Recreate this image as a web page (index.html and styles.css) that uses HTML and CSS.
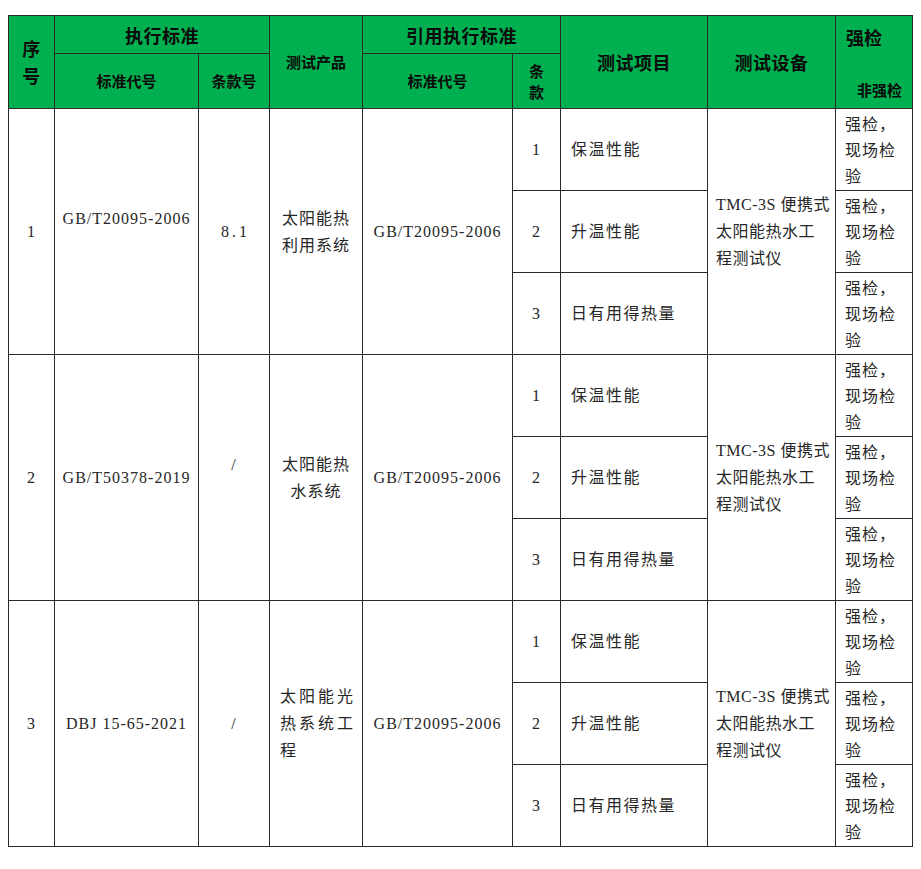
FILE: index.html
```html
<!DOCTYPE html>
<html lang="zh-CN">
<head>
<meta charset="utf-8">
<title>检测标准</title>
<link rel="stylesheet" href="styles.css">
</head>
<body>
<div class="sheet">
<table class="spec">
  <colgroup>
    <col class="c-no"><col class="c-code"><col class="c-clause"><col class="c-prod"><col class="c-ref"><col class="c-item-no"><col class="c-item"><col class="c-dev"><col class="c-check">
  </colgroup>
  <thead>
    <tr class="h1">
      <th rowspan="2" class="th-big th-no">序<br>号</th>
      <th colspan="2" class="th-big">执行标准</th>
      <th rowspan="2" class="th-small">测试产品</th>
      <th colspan="2" class="th-big">引用执行标准</th>
      <th rowspan="2" class="th-big">测试项目</th>
      <th rowspan="2" class="th-big">测试设备</th>
      <th rowspan="2" class="th-check">
        <div class="chk-top">强检</div>
        <div class="chk-bottom">非强检</div>
      </th>
    </tr>
    <tr class="h2">
      <th class="th-small">标准代号</th>
      <th class="th-small">条款号</th>
      <th class="th-small">标准代号</th>
      <th class="th-small th-narrow">条<br>款</th>
    </tr>
  </thead>
  <tbody>
    <tr class="sub">
      <td rowspan="3">1</td>
      <td rowspan="3">GB/T20095-2006<br>&nbsp;</td>
      <td rowspan="3" class="clause">8.1</td>
      <td rowspan="3">太阳能热<br>利用系统</td>
      <td rowspan="3">GB/T20095-2006</td>
      <td>1</td>
      <td class="item">保温性能</td>
      <td rowspan="3" class="dev">TMC-3S 便携式<br>太阳能热水工<br>程测试仪</td>
      <td class="chk">强检，<br>现场检<br>验</td>
    </tr>
    <tr class="sub">
      <td>2</td>
      <td class="item">升温性能</td>
      <td class="chk">强检，<br>现场检<br>验</td>
    </tr>
    <tr class="sub">
      <td>3</td>
      <td class="item">日有用得热量</td>
      <td class="chk">强检，<br>现场检<br>验</td>
    </tr>

    <tr class="sub">
      <td rowspan="3">2</td>
      <td rowspan="3">GB/T50378-2019</td>
      <td rowspan="3">/<br>&nbsp;</td>
      <td rowspan="3">太阳能热<br>水系统</td>
      <td rowspan="3">GB/T20095-2006</td>
      <td>1</td>
      <td class="item">保温性能</td>
      <td rowspan="3" class="dev">TMC-3S 便携式<br>太阳能热水工<br>程测试仪</td>
      <td class="chk">强检，<br>现场检<br>验</td>
    </tr>
    <tr class="sub">
      <td>2</td>
      <td class="item">升温性能</td>
      <td class="chk">强检，<br>现场检<br>验</td>
    </tr>
    <tr class="sub">
      <td>3</td>
      <td class="item">日有用得热量</td>
      <td class="chk">强检，<br>现场检<br>验</td>
    </tr>

    <tr class="sub">
      <td rowspan="3">3</td>
      <td rowspan="3">DBJ 15-65-2021</td>
      <td rowspan="3">/</td>
      <td rowspan="3" class="prod-wide">太阳能光<br>热系统工<br>程</td>
      <td rowspan="3">GB/T20095-2006</td>
      <td>1</td>
      <td class="item">保温性能</td>
      <td rowspan="3" class="dev">TMC-3S 便携式<br>太阳能热水工<br>程测试仪</td>
      <td class="chk">强检，<br>现场检<br>验</td>
    </tr>
    <tr class="sub">
      <td>2</td>
      <td class="item">升温性能</td>
      <td class="chk">强检，<br>现场检<br>验</td>
    </tr>
    <tr class="sub">
      <td>3</td>
      <td class="item">日有用得热量</td>
      <td class="chk">强检，<br>现场检<br>验</td>
    </tr>
  </tbody>
</table>
</div>
</body>
</html>
```
FILE: styles.css
```css
html, body {
  margin: 0;
  padding: 0;
  background: #ffffff;
}

body {
  font-family: "Liberation Serif", "Noto Sans CJK SC", serif;
}

.sheet {
  padding: 15px 0 0 8px;
}

.spec {
  border-collapse: collapse;
  table-layout: fixed;
  width: 904px;
}

.c-no { width: 46px; }
.c-code { width: 144px; }
.c-clause { width: 71px; }
.c-prod { width: 93px; }
.c-ref { width: 150px; }
.c-item-no { width: 48px; }
.c-item { width: 147px; }
.c-dev { width: 128px; }
.c-check { width: 77px; }

.spec th,
.spec td {
  border: 1px solid #2a2a2a;
  padding: 0;
}

.spec th {
  background: #00b050;
  color: #0a0a0a;
  font-family: "Noto Sans CJK SC", sans-serif;
  font-weight: 700;
  text-align: center;
  vertical-align: middle;
  white-space: nowrap;
}

.h1 { height: 38px; }
.h2 { height: 55px; }

.spec th.th-big {
  font-size: 18px;
  line-height: 22px;
  letter-spacing: 0.5px;
}

.spec th.th-no {
  line-height: 27px;
}

.spec th.th-small {
  font-size: 15px;
  line-height: 20px;
}

.spec th.th-narrow {
  line-height: 21px;
}

.spec th.th-check {
  text-align: left;
  vertical-align: top;
}

.chk-top {
  font-size: 18px;
  line-height: 22px;
  padding: 10px 0 0 10px;
}

.chk-bottom {
  font-size: 15px;
  line-height: 22px;
  text-align: right;
  padding-right: 10px;
  margin-top: 31px;
}

.spec td {
  font-size: 16px;
  line-height: 27px;
  letter-spacing: 1px;
  color: #262626;
  text-align: center;
  vertical-align: middle;
  white-space: nowrap;
}

.sub { height: 82px; }

.spec td.clause {
  letter-spacing: 3px;
  padding-left: 3px;
}

.spec td.item {
  text-align: left;
  padding-left: 10px;
  letter-spacing: 1.5px;
}

.spec td.dev {
  text-align: left;
  padding-left: 8px;
  letter-spacing: 0.5px;
}

.spec td.prod-wide {
  text-align: left;
  padding-left: 10px;
  letter-spacing: 3px;
}

.spec td.chk {
  text-align: left;
  vertical-align: top;
  padding: 3px 0 0 9px;
  line-height: 26px;
  letter-spacing: 1px;
}
```
